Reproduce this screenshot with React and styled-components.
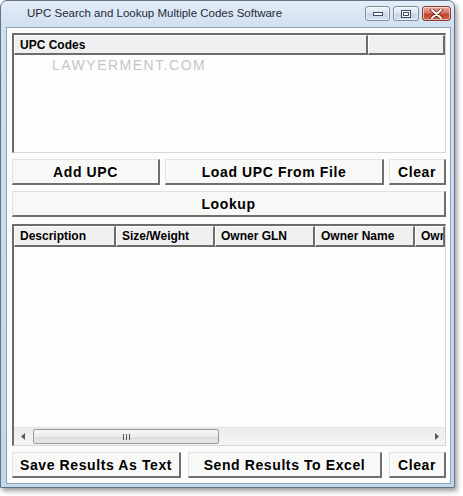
import React from 'react'
import styled, { createGlobalStyle } from 'styled-components'

const GlobalStyle = createGlobalStyle`
  html, body {
    margin: 0;
    padding: 0;
    background: #ffffff;
  }
  * {
    box-sizing: border-box;
  }
`

const Page = styled.div`
  width: 463px;
  height: 496px;
  background: #ffffff;
  font-family: 'Liberation Sans', Arial, sans-serif;
`

const Window = styled.div`
  width: 455px;
  height: 488px;
  display: flex;
  flex-direction: column;
  border: 1px solid #5f738a;
  border-radius: 7px 7px 0 0;
  background: linear-gradient(180deg, #e4edf7 0px, #cfdff0 26px, #c4d6ea 100%);
  box-shadow: 2px 3px 5px rgba(0, 0, 0, 0.4);
`

const TitleBar = styled.div`
  height: 26px;
  flex: none;
  display: flex;
  align-items: center;
  justify-content: space-between;
  padding: 0 3px 2px 26px;
`

const Title = styled.span`
  font-size: 11.5px;
  color: #1f2a36;
`

const Caption = styled.div`
  display: flex;
  gap: 3px;
  align-items: center;
  margin-top: 1px;
`

const CapButton = styled.div`
  width: ${p => p.$w}px;
  height: 15px;
  border: 1px solid ${p => (p.$close ? '#8a3a32' : '#7d8ea3')};
  border-radius: 3px;
  display: flex;
  align-items: center;
  justify-content: center;
  background: ${p =>
    p.$close
      ? 'linear-gradient(180deg, #e9a99b 0%, #d47763 45%, #c2412b 55%, #d1644d 100%)'
      : 'linear-gradient(180deg, #eef3f9 0%, #dbe5f0 45%, #c6d4e4 55%, #d5e1ee 100%)'};
  box-shadow: inset 0 0 0 1px rgba(255, 255, 255, 0.55);
`

const Client = styled.div`
  flex: 1;
  margin: 0 3px 3px 5px;
  border: 1px solid #8ea2b8;
  background: #fcfcfb;
  padding: 5px 4px 5px 5px;
  display: flex;
  flex-direction: column;
`

const ListBox = styled.div`
  height: ${p => p.$h}px;
  flex: none;
  position: relative;
  display: flex;
  flex-direction: column;
  background: #fdfdfc;
  border-top: 2px solid #6c6c6c;
  border-left: 2px solid #6c6c6c;
  border-right: 1px solid #d6d6d6;
  border-bottom: 1px solid #d6d6d6;
  overflow: hidden;
`

const HeaderRow = styled.div`
  height: ${p => p.$h}px;
  flex: none;
  display: flex;
  background: #f0f0f0;
  overflow: hidden;
`

const HeaderCell = styled.div`
  width: ${p => (p.$w ? `${p.$w}px` : 'auto')};
  flex: ${p => (p.$w ? 'none' : '1')};
  min-width: 0;
  display: flex;
  align-items: center;
  padding-left: 5px;
  font-size: 12px;
  font-weight: bold;
  color: #000;
  white-space: nowrap;
  overflow: hidden;
  border-top: 1px solid #ffffff;
  border-left: 1px solid #ffffff;
  border-right: 2px solid #6c6c6c;
  border-bottom: 2px solid #6c6c6c;
`

const ListBody = styled.div`
  flex: 1;
  position: relative;
`

const Watermark = styled.div`
  position: absolute;
  left: 38px;
  top: 2px;
  font-size: 14px;
  letter-spacing: 1.5px;
  color: #c6c6c6;
`

const ButtonRow = styled.div`
  height: 26px;
  flex: none;
  display: grid;
  grid-template-columns: ${p => p.$cols};
  column-gap: ${p => p.$gap}px;
  margin-top: ${p => p.$mt}px;
`

const Button = styled.div`
  height: 26px;
  display: flex;
  align-items: center;
  justify-content: center;
  background: #f8f8f7;
  border-top: 1px solid #e2e2e2;
  border-left: 1px solid #e2e2e2;
  border-right: 2px solid #6f6f6f;
  border-bottom: 2px solid #6f6f6f;
  font-size: 14px;
  font-weight: bold;
  letter-spacing: 0.6px;
  color: #000;
  white-space: nowrap;
`

const Spacer = styled.div`
  height: ${p => p.$h}px;
  flex: none;
`

const ScrollBar = styled.div`
  height: 18px;
  flex: none;
  display: flex;
  align-items: center;
  background: linear-gradient(180deg, #ececec 0%, #f4f4f4 100%);
  border-top: 1px solid #e4e4e4;
`

const Arrow = styled.div`
  width: 17px;
  height: 17px;
  flex: none;
  display: flex;
  align-items: center;
  justify-content: center;
`

const Track = styled.div`
  flex: 1;
  height: 17px;
  display: flex;
  align-items: center;
  padding-left: 2px;
`

const Thumb = styled.div`
  width: 186px;
  height: 15px;
  border: 1px solid #9a9a9a;
  border-radius: 2px;
  background: linear-gradient(180deg, #f6f6f6 0%, #ececec 50%, #dcdcdc 51%, #e6e6e6 100%);
  display: flex;
  align-items: center;
  justify-content: center;
  gap: 2px;
`

const Grip = styled.span`
  width: 1px;
  height: 6px;
  background: #5a5a5a;
`

const resultCols = [
  { label: 'Description', w: 102 },
  { label: 'Size/Weight', w: 99 },
  { label: 'Owner GLN', w: 100 },
  { label: 'Owner Name', w: 100 },
  { label: 'Owner' },
]

export default function App() {
  return (
    <Page>
      <GlobalStyle />
      <Window>
        <TitleBar>
          <Title>UPC Search and Lookup Multiple Codes Software</Title>
          <Caption>
            <CapButton $w={25}>
              <svg width="10" height="4" viewBox="0 0 10 4">
                <rect x="0.5" y="0.5" width="9" height="3" fill="#fff" stroke="#3d4f66" />
              </svg>
            </CapButton>
            <CapButton $w={26}>
              <svg width="10" height="8" viewBox="0 0 10 8">
                <rect x="0.5" y="0.5" width="9" height="7" fill="#fff" stroke="#3d4f66" />
                <rect x="2.5" y="2.5" width="5" height="3" fill="none" stroke="#3d4f66" />
              </svg>
            </CapButton>
            <CapButton $w={29} $close>
              <svg width="13" height="10" viewBox="0 0 13 10">
                <path d="M2 1 L11 9 M11 1 L2 9" stroke="#5a1a10" strokeWidth="3.4" strokeLinecap="round" />
                <path d="M2 1 L11 9 M11 1 L2 9" stroke="#ffffff" strokeWidth="2" strokeLinecap="round" />
              </svg>
            </CapButton>
          </Caption>
        </TitleBar>

        <Client>
          <ListBox $h={120}>
            <HeaderRow $h={20}>
              <HeaderCell $w={354}>UPC Codes</HeaderCell>
              <HeaderCell />
            </HeaderRow>
            <ListBody>
              <Watermark>LAWYERMENT.COM</Watermark>
            </ListBody>
          </ListBox>

          <ButtonRow $cols="148px 1fr 57px" $gap={5} $mt={6}>
            <Button>Add UPC</Button>
            <Button>Load UPC From File</Button>
            <Button>Clear</Button>
          </ButtonRow>

          <ButtonRow $cols="1fr" $gap={0} $mt={6}>
            <Button>Lookup</Button>
          </ButtonRow>

          <Spacer $h={7} />

          <ListBox $h={222}>
            <HeaderRow $h={21}>
              {resultCols.map(c => (
                <HeaderCell key={c.label} $w={c.w}>
                  {c.label}
                </HeaderCell>
              ))}
            </HeaderRow>
            <ListBody />
            <ScrollBar>
              <Arrow>
                <svg width="4" height="7" viewBox="0 0 4 7">
                  <path d="M4 0 L0 3.5 L4 7 Z" fill="#5a5a5a" />
                </svg>
              </Arrow>
              <Track>
                <Thumb>
                  <Grip />
                  <Grip />
                  <Grip />
                </Thumb>
              </Track>
              <Arrow>
                <svg width="4" height="7" viewBox="0 0 4 7">
                  <path d="M0 0 L4 3.5 L0 7 Z" fill="#5a5a5a" />
                </svg>
              </Arrow>
            </ScrollBar>
          </ListBox>

          <ButtonRow $cols="169px 1fr 57px" $gap={7} $mt={6}>
            <Button>Save Results As Text</Button>
            <Button>Send Results To Excel</Button>
            <Button>Clear</Button>
          </ButtonRow>
        </Client>
      </Window>
    </Page>
  )
}
